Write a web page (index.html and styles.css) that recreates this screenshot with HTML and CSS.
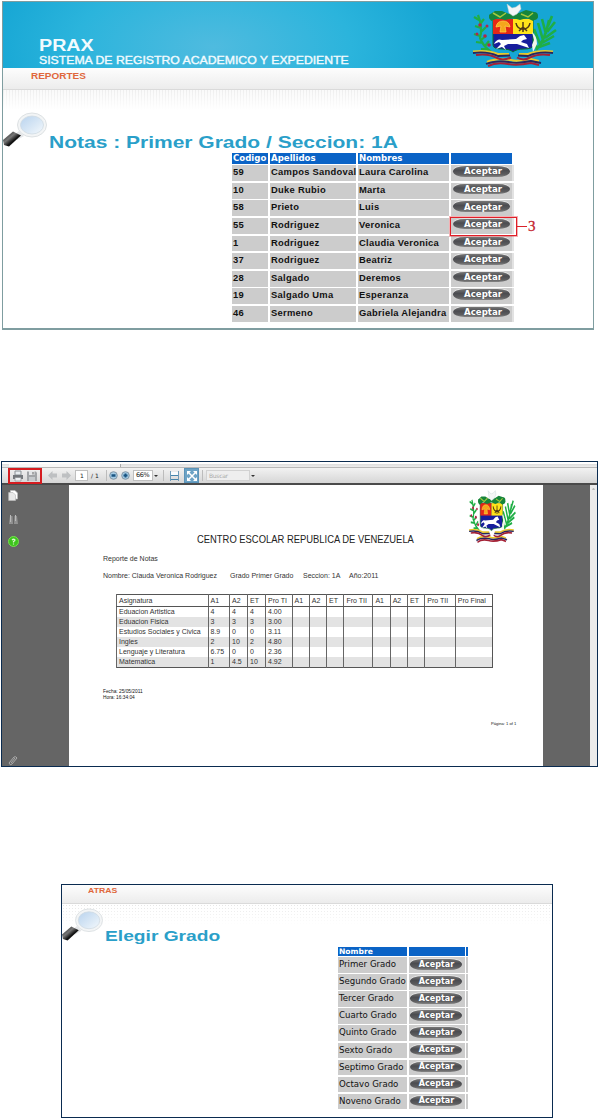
FILE: index.html
```
<!DOCTYPE html>
<html lang="es">
<head>
<meta charset="utf-8">
<title>PRAX</title>
<link rel="stylesheet" href="styles.css">
</head>
<body>
<svg class="defs" width="0" height="0" aria-hidden="true">
  <defs>
    <linearGradient id="lens" x1="0" y1="0" x2="1" y2="1"><stop offset="0" stop-color="#b9d3ee"/><stop offset=".6" stop-color="#dbe9f6"/><stop offset="1" stop-color="#f4f9fd"/></linearGradient>
    <linearGradient id="handle" x1="0" y1="0" x2="1" y2="1"><stop offset="0" stop-color="#111"/><stop offset=".4" stop-color="#777"/><stop offset=".6" stop-color="#111"/><stop offset="1" stop-color="#333"/></linearGradient>
    <symbol id="magnifier" viewBox="0 0 44 35" preserveAspectRatio="none">
      <path d="M16 19 21 24 14 28 11 23Z" fill="#e4e6e8"/>
      <path d="M0 28 10 19.500 18 23.500 6 34.500 1 33Z" fill="url(#handle)"/>
      <ellipse cx="29" cy="13" rx="14.500" ry="12" fill="#f3f5f6" stroke="#dde1e3"/>
      <ellipse cx="29" cy="13" rx="11.500" ry="9" fill="url(#lens)" stroke="#cfdae2" stroke-width=".8"/>
    </symbol>
    <symbol id="arms" viewBox="0 0 86 65" preserveAspectRatio="none">
      <g fill="none" stroke="#1fae45" stroke-width="2.200">
        <path d="M7 13Q12 26 9 36Q12 44 20 50M8 18 3 15M9 22 13 17M10 26 4 24M10 30 15 25M9 34 3 32M10 38 15 34M12 41 5 40M14 44 18 39M17 47 10 47"/>
        <path stroke-width="2.600" d="M65 48Q74 39 78 18M66 46 60 33M69 42 63 27M72 38 67 21M75 32 71 17M71 41 83 34M74 36 85 28M76 30 84 20M68 45 79 41M77 24 81 14"/>
      </g>
      <g fill="#b02848"><circle cx="9" cy="23" r="1.800"/><circle cx="16" cy="24" r="1.500"/><circle cx="6" cy="32" r="1.500"/><circle cx="14" cy="34" r="1.800"/><circle cx="18" cy="43" r="1.800"/></g>
      <path d="M22 17H62V43Q62 47 53 47 45 47 42 50 39 47 31 47 22 47 22 43Z" fill="#171d9c" stroke="#0d6a2d"/>
      <path d="M22 17H42V32H22Z" fill="#e32717"/><path d="M42 17H62V32H42Z" fill="#ffe41a"/>
      <path d="M25 25Q26 19 32 19 38 19 39 25L34 24 35 30H29L30 24Z" fill="#f5a51c" stroke="#ffcf45" stroke-width=".8"/>
      <path d="M45 21Q46 27 52 27 58 27 59 21M48 29 52 25 56 29M52 20V30" fill="none" stroke="#503914" stroke-width="1.500"/>
      <path d="M25 47 30 42 28 40 23 42Q26 36 31 38L45 37 49 34 53 33 56 37 52 38 50 40 56 42 58 46 55 45 46 42 37 42 33 44 35 48 31 45Z" fill="#fff"/>
      <path d="M61 30Q66 34 66 42L62 50 61 43 63 38Z" fill="#f1f6ea"/>
      <g fill="#16853a"><path d="M18 13 24 9 31 9 38 12 48 11 55 8 63 10 67 15 62 19 56 16 49 18 42 16 34 18 27 16 20 19Z"/><circle cx="21" cy="15" r="3"/><circle cx="63" cy="14" r="4"/></g>
      <path d="M22 11 29 15 35 11M50 12 57 15 62 11" fill="none" stroke="#a2c840" stroke-width="1.500"/>
      <path d="M36 2 41 6 45 5 49 2 50 7 46 12 42 14 38 11Z" fill="#f4f6f6" stroke="#b9cccc" stroke-width=".5"/>
      <g fill="none">
        <g stroke="#e8c82e" stroke-width="2"><path d="M2 49.500Q16 47.500 27 52L38 52"/><path d="M82 49.500Q68 47.500 57 52L48 52"/><path d="M16 60Q24 56 40 58 45 60 60 57L68 59"/></g>
        <g stroke="#28265e" stroke-width="1.800"><path d="M2 51Q16 49 27 54L39 53.500"/><path d="M82 51Q68 49 57 54L47 53.500"/><path d="M15 62Q24 58 38 60 46 62 60 59L70 61"/></g>
        <g stroke="#a42236" stroke-width="2"><path d="M5 53Q17 51 26 56Q32 59 40 55.500"/><path d="M79 53Q67 51 58 56Q52 59 46 55.500"/><path d="M17 64Q25 60 37 62 46 64 60 61L68 63"/></g>
      </g>
    </symbol>
  </defs>
</svg>

<section class="panel panel-notes">
  <header class="banner">
    <div>
      <div class="brand stretch">PRAX</div>
      <div class="tagline stretch">SISTEMA DE REGISTRO ACADEMICO Y EXPEDIENTE</div>
    </div>
    <svg class="banner-arms"><use href="#arms"/></svg>
  </header>
  <nav class="nav"><span class="stretch">REPORTES</span></nav>
  <div class="hero">
    <svg class="lens"><use href="#magnifier"/></svg>
    <h1 class="stretch">Notas : Primer Grado / Seccion: 1A</h1>
  </div>
  <div class="students">
    <div class="head"><b>Codigo</b><b>Apellidos</b><b>Nombres</b><b></b></div>
    <div class="row"><span>59</span><span>Campos Sandoval</span><span>Laura Carolina</span><span><button>Aceptar</button></span></div>
    <div class="row"><span>10</span><span>Duke Rubio</span><span>Marta</span><span><button>Aceptar</button></span></div>
    <div class="row"><span>58</span><span>Prieto</span><span>Luis</span><span><button>Aceptar</button></span></div>
    <div class="row marked"><span>55</span><span>Rodriguez</span><span>Veronica</span><span><button>Aceptar</button></span><div class="callout"><i></i><em>3</em></div></div>
    <div class="row"><span>1</span><span>Rodriguez</span><span>Claudia Veronica</span><span><button>Aceptar</button></span></div>
    <div class="row"><span>37</span><span>Rodriguez</span><span>Beatriz</span><span><button>Aceptar</button></span></div>
    <div class="row"><span>28</span><span>Salgado</span><span>Deremos</span><span><button>Aceptar</button></span></div>
    <div class="row"><span>19</span><span>Salgado Uma</span><span>Esperanza</span><span><button>Aceptar</button></span></div>
    <div class="row"><span>46</span><span>Sermeno</span><span>Gabriela Alejandra</span><span><button>Aceptar</button></span></div>
  </div>
</section>

<section class="panel panel-report">
  <div class="tabstrip"><i></i></div>
  <div class="toolbar">
    <div class="print-group">
      <svg width="12" height="12" viewBox="0 0 12 12"><path d="M3 1H9V5H3Z" fill="#e8edf0" stroke="#8b9296"/><path d="M1 5H11V9H1Z" fill="#73777b"/><path d="M3 7.500H9V11H3Z" fill="#eef1f3" stroke="#8c8f92" stroke-width=".7"/></svg>
      <svg width="12" height="12" viewBox="0 0 12 12"><path d="M1 1.500H10L11 3V11H1Z" fill="#a2a5a8"/><path d="M3 1H8.500V5H3Z" fill="#e4e6e8"/><path d="M3 7H9V11H3Z" fill="#c5c9cc"/><path d="M7 2V4.500" stroke="#666"/></svg>
    </div>
    <svg class="arrow-left" width="9" height="9" viewBox="0 0 9 9"><path d="M0 4.500 4.500 0V2.500H9V6.500H4.500V9Z" fill="#bec0c2"/></svg>
    <svg class="arrow-right" width="9" height="9" viewBox="0 0 9 9"><path d="M9 4.500 4.500 0V2.500H0V6.500H4.500V9Z" fill="#bec0c2"/></svg>
    <span class="field page-no">1</span><span class="page-total">/ 1</span><i class="divider"></i>
    <svg class="zoom-out" width="9" height="9" viewBox="0 0 9 9"><circle cx="4.500" cy="4.500" r="3.800" fill="#a5cbe4" stroke="#8396a5"/><path d="M2.500 4.500H6.500" stroke="#1a5482" stroke-width="2.500"/></svg>
    <svg class="zoom-in" width="9" height="9" viewBox="0 0 9 9"><circle cx="4.500" cy="4.500" r="3.800" fill="#a5cbe4" stroke="#8396a5"/><path d="M2.500 4.500H6.500M4.500 2.500V6.500" stroke="#1a5482" stroke-width="1.800"/></svg>
    <span class="field percent">66%</span><i class="caret"></i><i class="divider after-zoom"></i>
    <svg class="fit-width" width="9" height="10" viewBox="0 0 9 10"><path d="M.5 0V10M8.500 0V10" stroke="#6f9bb8"/><path d="M1 1H8V4H1Z" fill="#f9fcfe"/><path d="M1 4.500H8M1 8.500H8" stroke="#4685ac"/></svg>
    <span class="fit-page"><svg width="10" height="10" viewBox="0 0 10 10"><path d="M1.500 1.500 8.500 8.500M8.500 1.500 1.500 8.500" stroke="#fff" stroke-width="1.500"/><path d="M0 0H4L0 4ZM10 0V4L6 0ZM10 10H6L10 6ZM0 10V6L4 10Z" fill="#fff"/></svg></span>
    <i class="divider before-search"></i><span class="field search">Buscar</span><i class="caret"></i>
  </div>
  <div class="viewer">
    <aside class="rail">
      <svg width="10" height="11" viewBox="0 0 10 11"><path d="M2.500.5H7L9.500 3V9H2.500Z" fill="#fff" stroke="#bbb" stroke-width=".7"/><path d="M.7 2.500H5L7.500 5V10.500H.7Z" fill="#e8e8e8" stroke="#bbb" stroke-width=".7"/></svg>
      <svg class="binoculars" width="11" height="11" viewBox="0 0 11 11"><path d="M2 2H4.500L5 10H1ZM6.500 2H9L10 10H6Z" fill="#929292"/><path d="M2.500 1V8M7.500 1V7" stroke="#bababa"/></svg>
      <svg class="help" width="11" height="11" viewBox="0 0 11 11"><circle cx="5.500" cy="5.500" r="5" fill="#3cc41c" stroke="#77df50"/><path d="M4 4Q5.500 2.500 7 4 7 5 5.500 5.500V6.500M5.500 7.500V8.500" fill="none" stroke="#dcf7cf" stroke-width="1.200"/></svg>
      <svg class="clip" width="10" height="11" viewBox="0 0 10 11"><path d="M1 8 6 2Q8 1 9 3L4 9Q2 11 1 8M3 8 7 3" fill="none" stroke="#aaa"/></svg>
    </aside>
    <article class="sheet">
      <svg class="sheet-arms"><use href="#arms"/></svg>
      <h2>CENTRO ESCOLAR REPUBLICA DE VENEZUELA</h2>
      <p class="subject">Reporte de Notas</p>
      <p class="student"><span>Nombre: Clauda Veronica Rodriguez</span><span>Grado Primer Grado</span><span>Seccion: 1A</span><span>Año:2011</span></p>
      <table class="grades">
        <colgroup><col class="w-subject"><col class="w-first"><col class="w-third"><col class="w-third"><col class="w-term"><col class="w-mark"><col class="w-mark"><col class="w-mark"><col class="w-term2"><col class="w-mark"><col class="w-mark"><col class="w-mark"><col class="w-term3"><col class="w-final"></colgroup>
        <thead><tr><th>Asignatura</th><th>A1</th><th>A2</th><th>ET</th><th>Pro TI</th><th>A1</th><th>A2</th><th>ET</th><th>Fro TII</th><th>A1</th><th>A2</th><th>ET</th><th>Pro TII</th><th>Pro Final</th></tr></thead>
        <tbody>
          <tr><td>Eduacion Artistica</td><td>4</td><td>4</td><td>4</td><td>4.00</td><td></td><td></td><td></td><td></td><td></td><td></td><td></td><td></td><td></td></tr>
          <tr><td>Eduacion Fisica</td><td>3</td><td>3</td><td>3</td><td>3.00</td><td></td><td></td><td></td><td></td><td></td><td></td><td></td><td></td><td></td></tr>
          <tr><td>Estudios Sociales y Civica</td><td>8.9</td><td>0</td><td>0</td><td>3.11</td><td></td><td></td><td></td><td></td><td></td><td></td><td></td><td></td><td></td></tr>
          <tr><td>Ingles</td><td>2</td><td>10</td><td>2</td><td>4.80</td><td></td><td></td><td></td><td></td><td></td><td></td><td></td><td></td><td></td></tr>
          <tr><td>Lenguaje y Literatura</td><td>6.75</td><td>0</td><td>0</td><td>2.36</td><td></td><td></td><td></td><td></td><td></td><td></td><td></td><td></td><td></td></tr>
          <tr><td>Matematica</td><td>1</td><td>4.5</td><td>10</td><td>4.92</td><td></td><td></td><td></td><td></td><td></td><td></td><td></td><td></td><td></td></tr>
        </tbody>
      </table>
      <p class="stamp">Fecha: 25/05/2011<br>Hora: 16:34:04</p>
      <p class="page-mark">Página: 1 of 1</p>
    </article>
    <div class="scrollbar"><i></i></div>
  </div>
</section>

<section class="panel panel-grade">
  <nav class="nav"><span class="stretch">ATRAS</span></nav>
  <div class="hero">
    <svg class="lens"><use href="#magnifier"/></svg>
    <h1 class="stretch">Elegir Grado</h1>
  </div>
  <div class="levels">
    <div class="head"><b>Nombre</b><b></b><b></b></div>
    <div class="row"><span>Primer Grado</span><span><button>Aceptar</button></span><span></span></div>
    <div class="row"><span>Segundo Grado</span><span><button>Aceptar</button></span><span></span></div>
    <div class="row"><span>Tercer Grado</span><span><button>Aceptar</button></span><span></span></div>
    <div class="row"><span>Cuarto Grado</span><span><button>Aceptar</button></span><span></span></div>
    <div class="row"><span>Quinto Grado</span><span><button>Aceptar</button></span><span></span></div>
    <div class="row"><span>Sexto Grado</span><span><button>Aceptar</button></span><span></span></div>
    <div class="row"><span>Septimo Grado</span><span><button>Aceptar</button></span><span></span></div>
    <div class="row"><span>Octavo Grado</span><span><button>Aceptar</button></span><span></span></div>
    <div class="row"><span>Noveno Grado</span><span><button>Aceptar</button></span><span></span></div>
  </div>
</section>
</body>
</html>
```
FILE: styles.css
```
* { box-sizing: border-box; }
body { margin: 0; width: 598px; height: 1118px; overflow: hidden; background: #fff; font-family: "Liberation Sans", Arial, sans-serif; display: flex; flex-direction: column; }
h1, h2, p { margin: 0; font-weight: normal; }
svg { display: block; flex: none; }
.defs { position: absolute; }
.panel { flex: none; background: #fff; overflow: hidden; }
.stretch { display: inline-block; white-space: nowrap; transform-origin: 0 50%; }

/* Student list */
.panel-notes { width: 592px; height: 329px; margin: 1px 0 0 2px; border: 1px solid #7f9da0; border-bottom-width: 2px; }
.banner { height: 66px; padding: 35px 36px 0 36px; display: flex; justify-content: space-between; background: radial-gradient(ellipse 230px 120px at 210px 45px, #4fbbdf, #2bb4dc 60%, #16a6d4 100%); color: #f2fbfe; }
.brand { display: block; width: 60px; font-weight: bold; font-size: 16px; line-height: 17px; transform: scaleX(1.23); }
.tagline { display: block; margin-top: 1px; font-size: 10.5px; line-height: 11px; transform: scaleX(1.166); -webkit-text-stroke: .35px #f2fbfe; }
.banner-arms { width: 86px; height: 65px; margin-top: -35px; }
.nav { background: linear-gradient(#fdfdfd, #ececec); border-bottom: 1px solid #dadada; color: #e0673c; font-weight: bold; font-size: 8.5px; }
.panel-notes .nav { height: 22px; padding-left: 28px; line-height: 16px; }
.panel-notes .nav .stretch { transform: scaleX(1.175); }
.hero { display: flex; align-items: flex-start; background: linear-gradient(transparent, #fff) 0 0 / 100% 20px no-repeat, repeating-linear-gradient(90deg, #eee 0 1px, #fafafa 1px 3px) 0 0 / 100% 20px no-repeat; }
.panel-notes .hero { height: 63px; padding-top: 22px; }
.lens { width: 44px; height: 35px; }
.hero h1 { font-weight: bold; color: #2a9fc9; line-height: 20px; }
.panel-notes h1 { font-size: 17px; margin: 21px 0 0 2px; transform: scaleX(1.235); }
.students { width: 282px; margin-left: 229px; display: flex; flex-direction: column; gap: 1.7px; }
.head, .row { display: grid; column-gap: 2px; }
.head b { background: #0a63c6; color: #fff; font-family: "DejaVu Sans", sans-serif; font-size: 8.6px; padding-left: 1px; }
.row > span { background: #ccc; color: #111; white-space: nowrap; }
.students .head, .students .row { grid-template-columns: 36px 86px 91px 61px; }
.students .head b { height: 10.500px; line-height: 10.500px; }
.students .row > span { height: 15.900px; font-weight: bold; font-size: 9.4px; letter-spacing: .28px; line-height: 14px; padding-left: 1px; }
.students .row > span:nth-child(4) { box-shadow: 2px 0 0 #e2e2e2; }
button { display: block; border: 0; padding: 0; color: #fff; background: linear-gradient(#777, #4b4c50 40%, #5c5c5e 75%, #858585); border-radius: 14px / 6px; font: bold 8.6px/10px "DejaVu Sans", sans-serif; text-align: center; box-shadow: 0 -1px 0 #e4e4e4; }
.students button { width: 57px; height: 10.500px; margin: 1px 0 0 1px; padding-left: 3px; }
.marked { position: relative; }
.callout { position: absolute; left: 218px; top: -1px; display: flex; align-items: center; color: #c4232c; }
.callout::before { content: ""; width: 65px; height: 17px; border: 1.5px solid #e01f28; outline: .5px solid rgba(224, 31, 40, .35); }
.callout i { width: 10px; height: 1px; background: #d9232b; }
.callout em { font: 15px/16px "Liberation Serif", serif; margin-left: 1px; -webkit-text-stroke: .3px #c4232c; }

/* PDF viewer */
.panel-report { width: 597px; height: 306px; margin: 131px 0 0 1px; border: 1px solid #0a2b50; }
.tabstrip { height: 6px; padding: 2px 0 0 7px; background: linear-gradient(#fff 2px, #ddd 2px, #ededed 5px, #b8b8b8 5px); }
.tabstrip i { display: block; width: 112px; height: 3px; background: #f7f7f7; border-right: 1px solid #aaa; }
.toolbar { height: 15px; display: flex; align-items: center; background: linear-gradient(#f2f2f2, #d6d6d6); color: #222; font: 7px/9px "DejaVu Sans", sans-serif; }
.print-group { width: 34px; height: 16px; margin-left: 6px; border: 2px solid #d51c20; display: flex; align-items: center; justify-content: space-evenly; }
.arrow-left { margin-left: 6px; }
.arrow-right { margin-left: 5px; }
.field { height: 11px; background: #fff; border: 1px solid #bfbfbf; padding-left: 3px; }
.page-no { width: 13px; margin-left: 4px; padding-left: 4px; font-size: 6px; }
.page-total { margin-left: 3px; width: 10px; font-size: 6px; white-space: nowrap; }
.divider { width: 1px; height: 11px; margin-left: 5px; background: #bcbcbc; }
.zoom-out { margin-left: 2px; }
.zoom-in { margin-left: 3px; }
.percent { width: 20px; margin-left: 3px; padding-left: 2px; font-size: 6.500px; letter-spacing: -.4px; }
.caret { border: 2px solid transparent; border-top: 2.500px solid #333; border-bottom: 0; margin-left: 1px; }
.after-zoom { margin-left: 5px; }
.fit-width { margin-left: 6px; }
.fit-page { width: 15px; height: 15px; margin-left: 5px; background: #6ba2c5; border: 1px solid #5b93b8; display: grid; place-items: center; }
.before-search { margin-left: 3px; }
.search { width: 44px; margin-left: 3px; padding-left: 2px; border-color: #d2d2d2; background: #eee; color: #aaa; font-size: 6px; letter-spacing: -.3px; }
.viewer { height: 283px; border-top: 2px solid #4a4a4a; background: #656565; display: flex; }
.rail { width: 67px; padding: 5px 0 0 6px; }
.binoculars { margin-top: 13px; }
.help { margin-top: 11px; }
.clip { margin-top: 208px; }
.sheet { position: relative; width: 474px; padding: 49px 0 0 34px; background: #fff; color: #333; }
.sheet-arms { position: absolute; left: 399px; top: 4px; width: 48px; height: 54px; }
.sheet h2 { margin-left: 94px; font-size: 11px; line-height: 10px; color: #222; white-space: nowrap; transform: scaleX(.855); transform-origin: 0 50%; }
.subject, .student { font-size: 7px; line-height: 8px; white-space: nowrap; }
.subject { margin-top: 11px; }
.student { display: grid; grid-template-columns: 127px 73px 46px 40px; margin-top: 9px; }
.grades { width: 376px; margin: 14px 0 0 13px; table-layout: fixed; border-collapse: collapse; border: 1px solid #555; font-size: 7px; }
.grades th, .grades td { padding: 0 0 0 2px; border-left: 1px solid #666; text-align: left; font-weight: normal; white-space: nowrap; line-height: 8px; }
.grades th { height: 12px; border-bottom: 1px solid #555; }
.grades td { height: 10.200px; }
.grades tbody tr:nth-child(even) { background: #e3e3e3; }
.w-subject { width: 91.500px; } .w-first { width: 21.500px; } .w-third { width: 18px; } .w-term { width: 26.500px; } .w-mark { width: 17.300px; } .w-term2 { width: 29px; } .w-term3 { width: 30.500px; } .w-final { width: 37px; }
.stamp { margin-top: 21px; font-size: 4.800px; line-height: 5.500px; color: #111; }
.page-mark { margin: 21px 0 0 388px; font-size: 4.100px; line-height: 5px; white-space: nowrap; color: #111; }
.scrollbar { margin-left: auto; width: 7px; background: #ebebeb; padding: 3px 2px; }
.scrollbar i { display: block; border: 1.500px solid transparent; border-top: 0; border-bottom: 2px solid #bbb; }

/* Grade picker */
.panel-grade { width: 492px; height: 234px; margin: 117px 0 0 61px; border: 1px solid #0a2b50; }
.panel-grade .nav { height: 19px; padding-left: 26px; line-height: 11px; font-size: 7.700px; }
.panel-grade .nav .stretch { transform: scaleX(1.13); }
.panel-grade .hero { height: 43px; padding-top: 4px; background: linear-gradient(rgba(255, 255, 255, .2), #fff) 0 0 / 100% 21px no-repeat, radial-gradient(circle, #dedede .7px, transparent 1px) 0 0 / 3px 3px; }
.panel-grade .hero { background-size: 100% 21px, 3px 3px; background-color: #fff; background-image: linear-gradient(rgba(255, 255, 255, .2), #fff 21px), radial-gradient(circle, #dedede .7px, transparent 1px); background-repeat: no-repeat, repeat; background-size: 100% 100%, 3px 3px; }
.panel-grade .lens { width: 41px; height: 33px; }
.panel-grade h1 { font-size: 15px; margin: 18px 0 0 2px; transform: scaleX(1.28); }
.levels { width: 130px; margin-left: 276px; display: flex; flex-direction: column; gap: 1.350px; }
.levels .head, .levels .row { grid-template-columns: 69px 56px 2px; column-gap: 1.500px; }
.levels .head b { height: 9px; line-height: 9px; font-size: 7.600px; }
.levels .head b:last-child { padding: 0; }
.levels .row > span { height: 15.700px; line-height: 15.700px; font-family: "DejaVu Sans", sans-serif; font-size: 8.600px; padding-left: 1px; }
.levels .row > span:last-child { padding: 0; }
.levels button { width: 52px; height: 10.500px; margin-top: 2px; font-size: 8px; padding-left: 2px; }
```
